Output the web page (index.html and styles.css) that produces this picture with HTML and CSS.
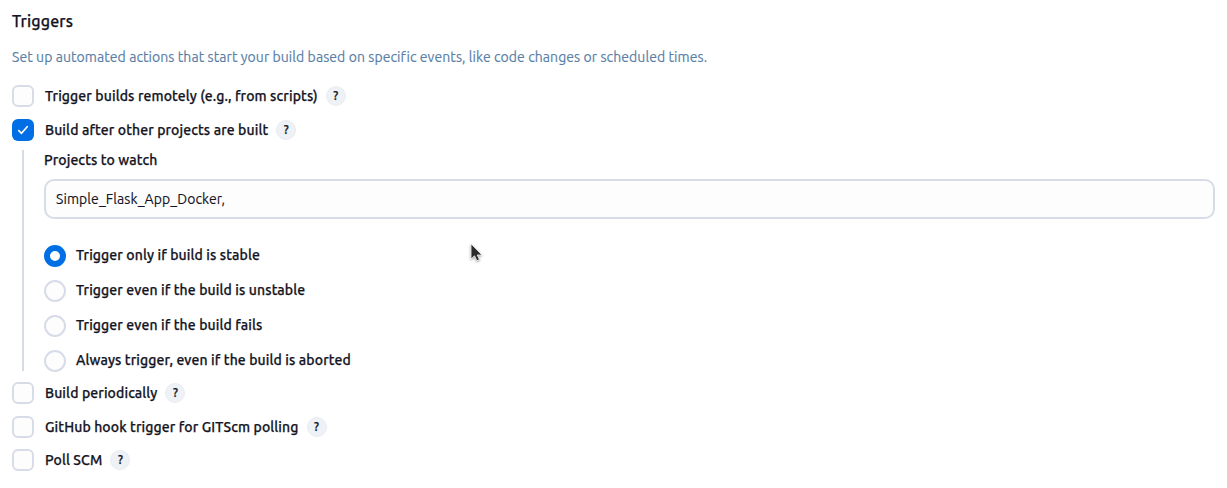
FILE: index.html
```html
<!DOCTYPE html>
<html lang="en">
<head>
<meta charset="utf-8">
<title>Triggers</title>
<link rel="stylesheet" href="styles.css">
</head>
<body>
<main class="section">
  <h2 class="title">Triggers</h2>
  <p class="description">Set up automated actions that start your build based on specific events, like code changes or scheduled times.</p>
  <div class="option"><span class="checkbox"></span><span class="label">Trigger builds remotely (e.g., from scripts)</span><span class="help">?</span></div>
  <div class="option"><span class="checkbox checked"><svg viewBox="0 0 22 22"><path d="M6.800 11.600l2.700 2.700 5.700-6.600"/></svg></span><span class="label">Build after other projects are built</span><span class="help">?</span></div>
  <div class="nested">
    <div class="field-label">Projects to watch</div>
    <div class="input"><span class="value">Simple_Flask_App_Docker,</span></div>
    <div class="radios">
      <div class="choice"><span class="radio selected"></span><span class="label">Trigger only if build is stable</span></div>
      <div class="choice"><span class="radio"></span><span class="label">Trigger even if the build is unstable</span></div>
      <div class="choice"><span class="radio"></span><span class="label">Trigger even if the build fails</span></div>
      <div class="choice"><span class="radio"></span><span class="label">Always trigger, even if the build is aborted</span></div>
    </div>
  </div>
  <div class="option"><span class="checkbox"></span><span class="label">Build periodically</span><span class="help">?</span></div>
  <div class="option compact"><span class="checkbox"></span><span class="label">GitHub hook trigger for GITScm polling</span><span class="help">?</span></div>
  <div class="option"><span class="checkbox"></span><span class="label">Poll SCM</span><span class="help">?</span></div>
</main>
<svg class="cursor" viewBox="0 0 14 20"><path d="M1 .8v15.200l3.500-3.200 2.400 5 2.600-1.200-2.300-4.600h4.800z"/></svg>
</body>
</html>
```
FILE: styles.css
```css
* { box-sizing: border-box; }
body { margin: 0; background: #fff; color: #14141f; font: 14px/20px Ubuntu, "Noto Sans", sans-serif; }
.section { padding: 11px 12px 0; }
.title { margin: 0; font-size: 16px; line-height: 20px; font-weight: 500; letter-spacing: .15px; -webkit-text-stroke: .25px; }
.description { margin: 16px 0 18px; color: #587ea6; white-space: nowrap; letter-spacing: .073px; -webkit-text-stroke: .15px; }
.option { display: flex; align-items: center; height: 22px; margin-bottom: 12px; }
.compact { margin-bottom: 11px; }
.checkbox { width: 22px; height: 22px; border: 2px solid #d7dce8; border-radius: 6px; margin-right: 11px; flex: none; background: #fdfdfe; }
.checked { border: 0; background: #006fe6; }
.checked svg { display: block; fill: none; stroke: #fff; stroke-width: 1.700; stroke-linecap: round; stroke-linejoin: round; }
.label, .field-label { font-weight: 500; white-space: nowrap; letter-spacing: .115px; -webkit-text-stroke: .25px; }
.help { width: 20px; height: 20px; border: 1px solid #e8ecf1; border-radius: 50%; background: #eef1f5; margin-left: 8px; text-align: center; font-size: 12px; line-height: 18px; font-weight: 500; -webkit-text-stroke: .25px; }
.nested { margin: -3px 0 11px 10px; border-left: 2px solid #d7dae8; padding-left: 20px; height: 221px; }
.input { height: 40px; border: 2px solid #d7dce8; border-radius: 10px; margin-top: 9px; padding: 8px 10px; background: #fdfdfe; }
.value { letter-spacing: .080px; -webkit-text-stroke: .12px; }
.radios { padding-top: 26px; }
.choice { display: flex; align-items: center; height: 22px; margin-bottom: 13px; }
.choice .label { padding-bottom: 2px; }
.radio { width: 22px; height: 22px; border: 2px solid #d7dce8; border-radius: 50%; margin-right: 10px; background: #fdfdfe; }
.selected { border: 6px solid #006fe6; }
.cursor { position: absolute; left: 470px; top: 243px; width: 14px; height: 20px; fill: #2b2b2b; stroke: #fff; stroke-width: .8px; overflow: visible; filter: drop-shadow(0 1px 1px #0006); }
```
